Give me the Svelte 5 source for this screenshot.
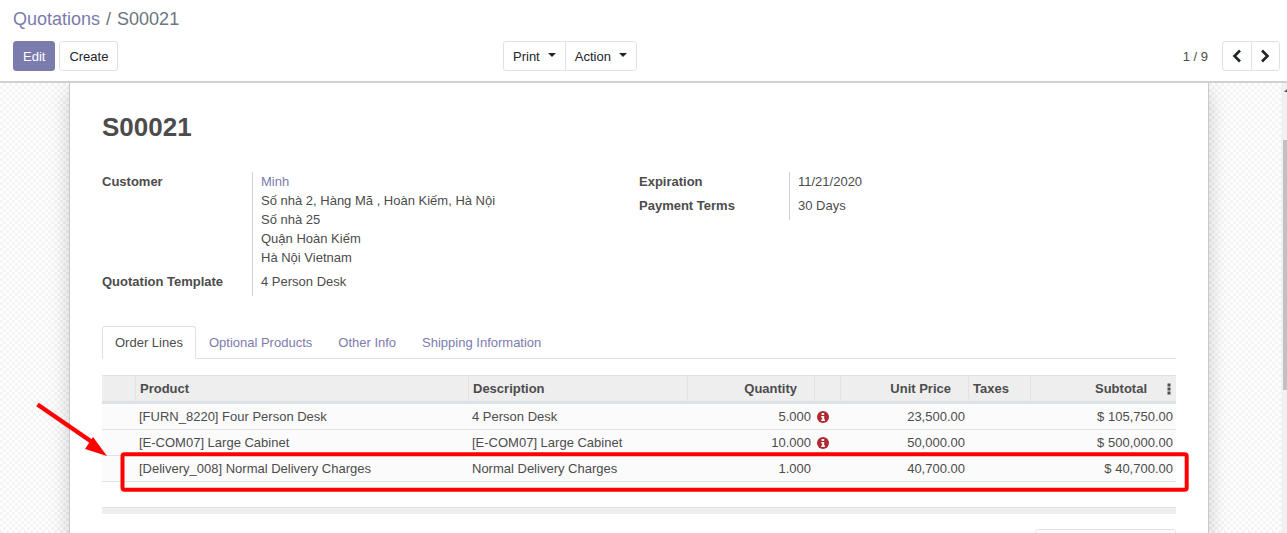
<script lang="ts">
  const address = ["Số nhà 2, Hàng Mã , Hoàn Kiếm, Hà Nội", "Số nhà 25", "Quận Hoàn Kiếm", "Hà Nội Vietnam"];
  const tabs = ["Optional Products", "Other Info", "Shipping Information"];
  const lines = [
    { product: "[FURN_8220] Four Person Desk", desc: "4 Person Desk", qty: "5.000", warn: true, price: "23,500.00", subtotal: "$ 105,750.00" },
    { product: "[E-COM07] Large Cabinet", desc: "[E-COM07] Large Cabinet", qty: "10.000", warn: true, price: "50,000.00", subtotal: "$ 500,000.00" },
    { product: "[Delivery_008] Normal Delivery Charges", desc: "Normal Delivery Charges", qty: "1.000", warn: false, price: "40,700.00", subtotal: "$ 40,700.00" },
  ];
</script>

<div class="page">
  <header class="control-panel">
    <div class="breadcrumb"><span class="crumb-link">Quotations</span><span class="sep">/</span><span>S00021</span></div>
    <div class="toolbar">
      <div class="left">
        <button class="btn btn-primary">Edit</button>
        <button class="btn">Create</button>
      </div>
      <div class="group center">
        <button class="btn">Print<i class="caret"></i></button>
        <button class="btn">Action<i class="caret"></i></button>
      </div>
      <div class="pager">
        <span class="count">1 / 9</span>
        <div class="group">
          <button class="btn btn-nav" aria-label="Previous">
            <svg width="10" height="14" viewBox="0 0 10 14"><path d="M8 1.500 2.500 7 8 12.500" fill="none" stroke="#212529" stroke-width="2.600"/></svg>
          </button>
          <button class="btn btn-nav" aria-label="Next">
            <svg width="10" height="14" viewBox="0 0 10 14"><path d="M2 1.500 7.500 7 2 12.500" fill="none" stroke="#212529" stroke-width="2.600"/></svg>
          </button>
        </div>
      </div>
    </div>
  </header>

  <main class="content">
    <section class="sheet">
      <h1>S00021</h1>

      <div class="fields">
        <div class="field-group">
          <div class="field">
            <span class="label">Customer</span>
            <div class="value">
              <a href="#customer">Minh</a>
              {#each address as line}<div>{line}</div>{/each}
            </div>
          </div>
          <div class="field">
            <span class="label">Quotation Template</span>
            <div class="value">4 Person Desk</div>
          </div>
        </div>
        <div class="field-group side">
          <div class="field">
            <span class="label">Expiration</span>
            <div class="value">11/21/2020</div>
          </div>
          <div class="field">
            <span class="label">Payment Terms</span>
            <div class="value">30 Days</div>
          </div>
        </div>
      </div>

      <nav class="tabs">
        <span class="tab active">Order Lines</span>
        {#each tabs as tab}<span class="tab">{tab}</span>{/each}
      </nav>

      <div class="grid head">
        <div></div>
        <div>Product</div>
        <div>Description</div>
        <div class="num">Quantity</div>
        <div></div>
        <div class="num">Unit Price</div>
        <div>Taxes</div>
        <div class="num subtotal-head">Subtotal
          <svg width="4" height="12" viewBox="0 0 4 12"><path d="M0.500 0.500h3v3h-3zM0.500 4.500h3v3h-3zM0.500 8.500h3v3h-3z" fill="#4c4c4c"/></svg>
        </div>
      </div>
      {#each lines as l}
        <div class="grid row">
          <div></div>
          <div>{l.product}</div>
          <div>{l.desc}</div>
          <div class="num">{l.qty}</div>
          <div class="warn">
            {#if l.warn}
              <svg width="12" height="12" viewBox="0 0 12 12">
                <circle cx="6" cy="6" r="6" fill="#b02a2f"/>
                <path d="M4.600 2h2.600v2H4.600zM4.200 5h3v3.600h.8V10H4.200V8.600h1V6.400h-1z" fill="#fff"/>
              </svg>
            {/if}
          </div>
          <div class="num">{l.price}</div>
          <div></div>
          <div class="num">{l.subtotal}</div>
        </div>
      {/each}

      <div class="table-foot"></div>
      <div class="summary-row"><div class="summary-box"></div></div>
    </section>
    <div class="scrollbar"><i class="scroll-up"></i><div class="thumb"></div></div>
  </main>

  <svg class="annotation" width="1287" height="533" viewBox="0 0 1287 533" aria-hidden="true">
    <path d="M37.500 404.500 92 442" stroke="#f00" stroke-width="4.500" fill="none"/>
    <path d="M107 456 85 449 93 437Z" fill="#f00"/>
    <rect x="122.500" y="454.300" width="1064.200" height="35.400" rx="2" fill="none" stroke="#f00" stroke-width="4"/>
  </svg>
</div>

<style>
  :global(body) {
    margin: 0;
  }

  .page {
    position: relative;
    width: 1287px;
    height: 533px;
    overflow: hidden;
    display: flex;
    flex-direction: column;
    background: #fff;
    color: #4c4c4c;
    font-family: "Liberation Sans", Arial, sans-serif;
    font-size: 13px;
  }

  .control-panel {
    height: 83px;
    box-sizing: border-box;
    padding: 7px 7px 0 13px;
    border-bottom: 2px solid #d0d0d0;
    flex: none;
  }

  .breadcrumb {
    height: 34px;
    font-size: 18px;
    line-height: 25px;
    color: #6c757d;
  }

  .crumb-link {
    color: #7c7bad;
  }

  .sep {
    margin: 0 6px;
  }

  .toolbar {
    display: grid;
    grid-template-columns: 490px auto 1fr;
    align-items: center;
  }

  .left {
    display: flex;
    gap: 4px;
  }

  .btn {
    height: 30px;
    padding: 0 9px;
    box-sizing: border-box;
    background: #fff;
    border: 1px solid #dee2e6;
    border-radius: 3px;
    color: #212529;
    font: inherit;
    font-size: 13px;
    display: flex;
    align-items: center;
    justify-content: center;
  }

  .btn-primary {
    background: #7c7bad;
    border-color: #7c7bad;
    color: #fff;
  }

  .group {
    display: flex;
  }

  .group .btn:first-child {
    border-radius: 3px 0 0 3px;
  }

  .group .btn:last-child {
    border-radius: 0 3px 3px 0;
    margin-left: -1px;
  }

  .caret {
    display: inline-block;
    margin-left: 8px;
    margin-bottom: 3px;
    border: 4px solid transparent;
    border-top-color: #212529;
    border-bottom: 0;
  }

  .pager {
    display: flex;
    justify-content: flex-end;
    align-items: center;
    gap: 14px;
  }

  .count {
    color: #4c4c4c;
  }

  .btn-nav {
    width: 29.500px;
    padding: 0;
  }

  .content {
    flex: 1;
    min-height: 0;
    display: flex;
    justify-content: center;
    overflow: hidden;
    position: relative;
    padding-right: 9px;
    background-color: #fff;
    background-image: repeating-conic-gradient(#f4f4f4 0 25%, #fff 0 50%);
    background-size: 6px 6px;
  }

  .sheet {
    width: 1074px;
    height: 600px;
    padding: 0 32px;
    flex: none;
    background: #fff;
    border-left: 1px solid #c8c8d0;
    border-right: 1px solid #c8c8d0;
    box-shadow: 0 5px 20px -1px rgba(0, 0, 0, 0.2);
  }

  h1 {
    margin: 29px 0 0;
    font-size: 26px;
    line-height: 30px;
    font-weight: 700;
    color: #4c4c4c;
  }

  .fields {
    display: grid;
    grid-template-columns: 537px 1fr;
    margin-top: 30px;
    line-height: 19px;
  }

  .field {
    display: flex;
  }

  .label {
    width: 150px;
    flex: none;
    font-weight: 700;
  }

  .value {
    border-left: 1px solid #ced4da;
    padding: 0 0 5px 8px;
    flex: 1;
  }

  a {
    color: #7c7bad;
    text-decoration: none;
  }

  .tabs {
    display: flex;
    margin-top: 30px;
    height: 33px;
    box-sizing: border-box;
    border-bottom: 1px solid #dee2e6;
  }

  .tab {
    padding: 0 13px;
    height: 33px;
    box-sizing: border-box;
    line-height: 32px;
    color: #7c7bad;
    border-top: 1px solid transparent;
  }

  .tab.active {
    padding: 0 12px;
    background: #fff;
    color: #4c4c4c;
    border: 1px solid #dee2e6;
    border-bottom-color: #fff;
    border-radius: 3px 3px 0 0;
  }

  .grid {
    display: grid;
    grid-template-columns: 33px 333px 219px 127px 26px 128px 62px 146px;
  }

  .grid > div {
    box-sizing: border-box;
    padding: 0 3px 0 4px;
    white-space: nowrap;
  }

  .head {
    margin-top: 16px;
    height: 29px;
    box-sizing: border-box;
    background: #eee;
    border-top: 1px solid #dee2e6;
    border-bottom: 3px solid #dee2e6;
    font-weight: 700;
    line-height: 26px;
  }

  .head > div {
    border-left: 1px solid #e2e2e2;
  }

  .head > div:first-child {
    border-left: 0;
  }

  .grid.head .num {
    padding-right: 17px;
  }

  .grid.head .subtotal-head {
    padding-right: 5px;
    display: flex;
    justify-content: flex-end;
    align-items: center;
    gap: 20px;
  }

  .row {
    height: 26px;
    box-sizing: border-box;
    line-height: 25px;
    background: #fbfbfb;
    border-bottom: 1px solid #dee2e6;
  }

  .num {
    text-align: right;
  }

  .warn {
    display: flex;
    align-items: center;
  }

  .warn svg {
    margin-left: -1px;
  }

  .table-foot {
    margin-top: 25px;
    height: 7px;
    background: #eee;
    border-top: 1px solid #e2e2e2;
    box-sizing: border-box;
  }

  .summary-row {
    display: flex;
    justify-content: flex-end;
    margin-top: 15px;
  }

  .summary-box {
    width: 141px;
    height: 40px;
    box-sizing: border-box;
    border: 1px solid #dee2e6;
    border-radius: 3px;
  }

  .scrollbar {
    position: absolute;
    top: 0;
    right: 0;
    bottom: 0;
    width: 6px;
    background: #f1f1f1;
  }

  .scroll-up {
    position: absolute;
    top: 6px;
    left: 3px;
    border: 3px solid transparent;
    border-bottom-color: #505050;
    border-top: 0;
  }

  .thumb {
    margin: 57px 0 0 2px;
    height: 250px;
    background: #c1c1c1;
  }

  .annotation {
    position: absolute;
    inset: 0;
    pointer-events: none;
  }
</style>
